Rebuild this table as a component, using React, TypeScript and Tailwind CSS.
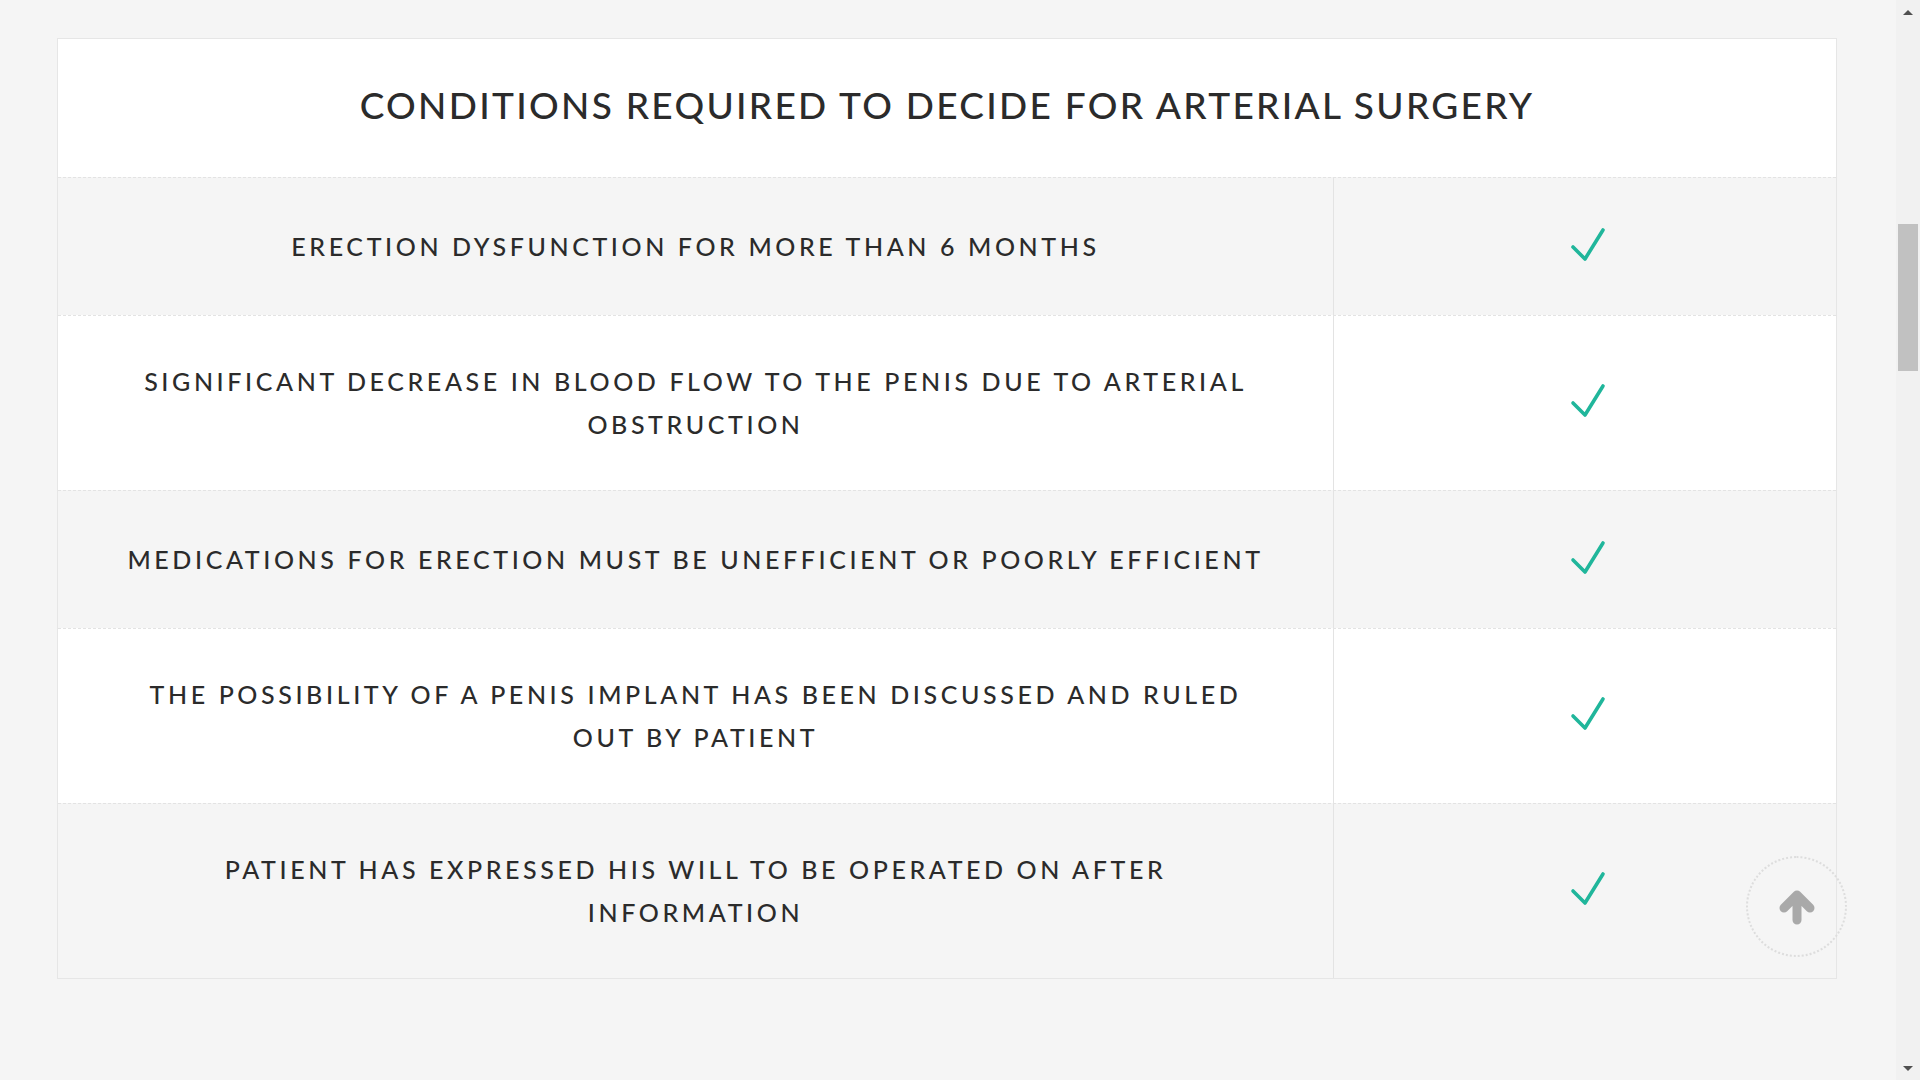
const rows = [
  ["ERECTION DYSFUNCTION FOR MORE THAN 6 MONTHS"],
  ["SIGNIFICANT DECREASE IN BLOOD FLOW TO THE PENIS DUE TO ARTERIAL", "OBSTRUCTION"],
  ["MEDICATIONS FOR ERECTION MUST BE UNEFFICIENT OR POORLY EFFICIENT"],
  ["THE POSSIBILITY OF A PENIS IMPLANT HAS BEEN DISCUSSED AND RULED", "OUT BY PATIENT"],
  ["PATIENT HAS EXPRESSED HIS WILL TO BE OPERATED ON AFTER", "INFORMATION"],
];

function Check() {
  return (
    <svg width="38" height="40" viewBox="0 0 38 40" fill="none" className="ml-[5px]">
      <path
        d="M4 20 L16 32 L34 3"
        stroke="#20b69b"
        strokeWidth="3.6"
        strokeLinecap="round"
        strokeLinejoin="round"
      />
    </svg>
  );
}

function ArrowUp() {
  return (
    <svg width="38" height="36" viewBox="0 0 38 36" fill="none">
      <path
        d="M6 19 L19 6 L32 19 M19 8 L19 31"
        stroke="#a9a9a9"
        strokeWidth="9"
        strokeLinecap="round"
        strokeLinejoin="round"
      />
    </svg>
  );
}

export default function App() {
  return (
    <div className="h-[1080px] w-[1920px] overflow-hidden flex bg-[#f5f5f5] font-['Lato','Open_Sans',sans-serif] text-[#2b2b2b]">
      <main className="flex-1 relative">
        <div className="ml-[57px] mt-[38px] w-[1780px] border border-[#e6e6e6]">
          <div className="bg-white h-[138px] pb-[7px] flex items-center justify-center">
            <h1 className="text-[37px] tracking-[2.3px] font-medium">
              CONDITIONS REQUIRED TO DECIDE FOR ARTERIAL SURGERY
            </h1>
          </div>
          {rows.map((r, i) => (
            <div
              key={i}
              className={`flex min-h-[138px] border-t border-dashed border-[#e3e3e3] ${
                i % 2 === 0 ? "bg-[#f5f5f5]" : "bg-white"
              }`}
            >
              <div className="w-[1276px] px-[40px] py-[44px] flex flex-col justify-center text-center text-[25px] leading-[43px] tracking-[3.6px] font-medium border-r border-solid border-[#e3e3e3] whitespace-nowrap">
                {r.map((line, j) => (
                  <div key={j}>{line}</div>
                ))}
              </div>
              <div className="flex-1 flex items-center justify-center">
                <Check />
              </div>
            </div>
          ))}
        </div>
        <button className="absolute left-[1746px] top-[856px] w-[101px] h-[101px] rounded-full border-2 border-dotted border-[#dddddd] flex items-center justify-center">
          <ArrowUp />
        </button>
      </main>
      <div className="w-[24px] bg-[#f1f1f1] flex flex-col items-center">
        <div className="h-[24px] flex items-center justify-center">
          <div className="w-0 h-0 border-l-[5px] border-r-[5px] border-b-[5px] border-l-transparent border-r-transparent border-b-[#505050]" />
        </div>
        <div className="mt-[200px] w-[20px] h-[147px] bg-[#c1c1c1]" />
        <div className="flex-1" />
        <div className="h-[24px] flex items-center justify-center">
          <div className="w-0 h-0 border-l-[5px] border-r-[5px] border-t-[5px] border-l-transparent border-r-transparent border-t-[#505050]" />
        </div>
      </div>
    </div>
  );
}
